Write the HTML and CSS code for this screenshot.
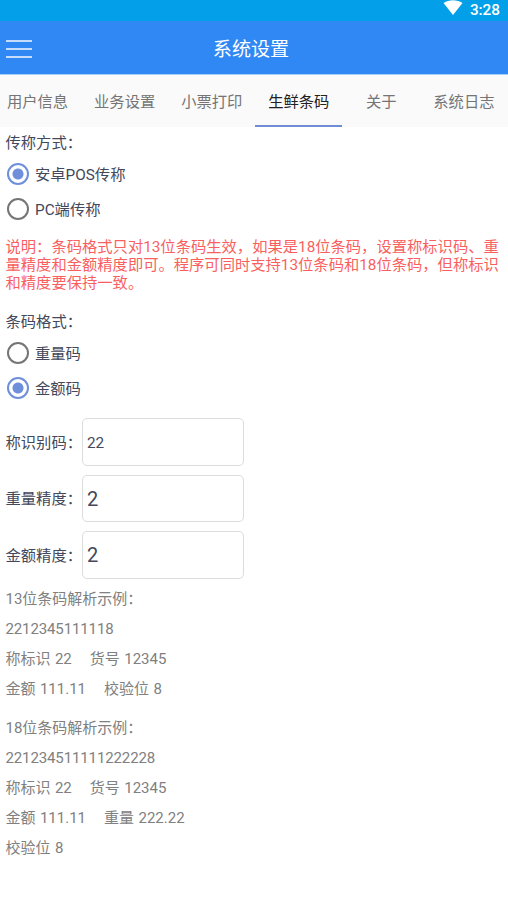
FILE: index.html
```
<!DOCTYPE html>
<html lang="zh-CN">
<head>
    <meta charset="UTF-8">
    <meta name="viewport" content="width=device-width, initial-scale=1.0">
    <title>系统设置</title>
    <link rel="stylesheet" href="styles.css">
</head>
<body>
    <div class="status-bar">
        <svg class="wifi" viewBox="0 0 20 15" width="20" height="15">
            <path d="M0.5 3 C6 -0.8 14 -0.8 19.5 3 L10 15 Z" fill="#fff"/>
        </svg>
        <span class="time">3:28</span>
    </div>

    <header class="header">
        <button class="menu" type="button" aria-label="菜单">
            <span></span>
            <span></span>
            <span></span>
        </button>
        <h1>系统设置</h1>
    </header>

    <nav class="tabs">
        <a class="tab">用户信息</a>
        <a class="tab">业务设置</a>
        <a class="tab">小票打印</a>
        <a class="tab active">生鲜条码</a>
        <a class="tab short">关于</a>
        <a class="tab">系统日志</a>
    </nav>

    <form class="content">
        <div class="group">
            <p class="group-title">传称方式：</p>
            <label class="radio"><input type="radio" name="mode" checked><span>安卓POS传称</span></label>
            <label class="radio"><input type="radio" name="mode"><span>PC端传称</span></label>
        </div>

        <p class="notice">说明：条码格式只对13位条码生效，如果是18位条码，设置称标识码、重<br>量精度和金额精度即可。程序可同时支持13位条码和18位条码，但称标识<br>和精度要保持一致。</p>

        <div class="group">
            <p class="group-title">条码格式：</p>
            <label class="radio"><input type="radio" name="format"><span>重量码</span></label>
            <label class="radio"><input type="radio" name="format" checked><span>金额码</span></label>
        </div>

        <div class="fields">
            <div class="field">
                <label for="code">称识别码：</label>
                <input class="small" type="text" id="code" value="22">
            </div>
            <div class="field">
                <label for="weight">重量精度：</label>
                <input type="text" id="weight" value="2">
            </div>
            <div class="field">
                <label for="amount">金额精度：</label>
                <input type="text" id="amount" value="2">
            </div>
        </div>

        <div class="example">
            <p>13位条码解析示例：</p>
            <p class="number">2212345111118</p>
            <p><span>称标识 22</span><span>货号 12345</span></p>
            <p><span>金额 111.11</span><span>校验位 8</span></p>
        </div>
        <div class="example">
            <p>18位条码解析示例：</p>
            <p class="number">221234511111222228</p>
            <p><span>称标识 22</span><span>货号 12345</span></p>
            <p><span>金额 111.11</span><span>重量 222.22</span></p>
            <p>校验位 8</p>
        </div>
    </form>
</body>
</html>
```
FILE: styles.css
```
* {
    box-sizing: border-box;
}
body {
    font-family: Roboto, "Noto Sans CJK SC", sans-serif;
    font-size: 15.3px;
    color: #43485a;
    background-color: #fff;
    margin: 0;
    overflow: hidden;
}
p, h1 {
    margin: 0;
}
.status-bar {
    display: flex;
    justify-content: flex-end;
    height: 21px;
    padding-right: 8px;
    background-color: #039fe8;
    color: #fff;
}
.time {
    margin-left: 7px;
    font-size: 15.3px;
    font-weight: 500;
    line-height: 20px;
}
.header {
    display: grid;
    grid-template-columns: 38px 1fr 38px;
    align-items: center;
    height: 53px;
    padding-right: 6px;
    background-color: #3088f4;
    color: #fff;
}
.menu {
    display: flex;
    flex-direction: column;
    gap: 6px;
    width: 26px;
    margin: 2px 0 0 6px;
    padding: 0;
    background: none;
    border: none;
}
.menu span {
    height: 2px;
    background-color: #c5dcfb;
}
h1 {
    padding-top: 4px;
    font-size: 19.1px;
    font-weight: 400;
    line-height: 50px;
    text-align: center;
}
.tabs {
    display: flex;
    width: 514px;
    height: 53px;
    margin-left: -6px;
    background-color: #fafafa;
    border-top: 1px solid #a9cdf9;
    color: #757575;
}
.tab {
    flex: none;
    width: 87.1px;
    height: 52px;
    line-height: 54px;
    text-align: center;
    border-bottom: 2px solid transparent;
}
.tab.short {
    width: 78px;
}
.tab.active {
    color: #212121;
    border-bottom-color: #6f8dd6;
}
.content {
    padding: 4px 5.5px 0;
}
.group-title {
    height: 25px;
    line-height: 24px;
}
.radio {
    display: flex;
    align-items: center;
    gap: 6px;
    height: 35px;
}
.radio input {
    appearance: none;
    width: 22px;
    height: 22px;
    margin: 0 0 0 1.5px;
    border: 2px solid #757575;
    border-radius: 50%;
}
.radio input:checked {
    border-color: #6f8fdb;
    background: radial-gradient(circle, #6f8fdb 5px, transparent 6px);
}
.radio span {
    padding-bottom: 2px;
}
.notice {
    margin: 12px 0 18px;
    color: #f95f5f;
    line-height: 18px;
    white-space: nowrap;
}
.fields {
    display: grid;
    gap: 9px;
    margin-top: 13.4px;
}
.field {
    display: flex;
    align-items: center;
}
.field label {
    width: 76.5px;
    padding-bottom: 2px;
    white-space: nowrap;
}
.field input {
    width: 162px;
    height: 47.4px;
    padding: 1px 4px 0;
    border: 1px solid #dcdcdc;
    border-radius: 5px;
    background-color: #fff;
    color: #43485a;
    font-family: inherit;
    font-size: 20px;
}
.field .small {
    font-size: 15.3px;
}
.example {
    margin: 5.6px 0 9px;
    color: #808080;
    font-size: 15px;
    line-height: 30px;
    word-spacing: 0.7px;
}
.example span {
    margin-right: 18px;
}
.number {
    letter-spacing: -0.12px;
}
```
